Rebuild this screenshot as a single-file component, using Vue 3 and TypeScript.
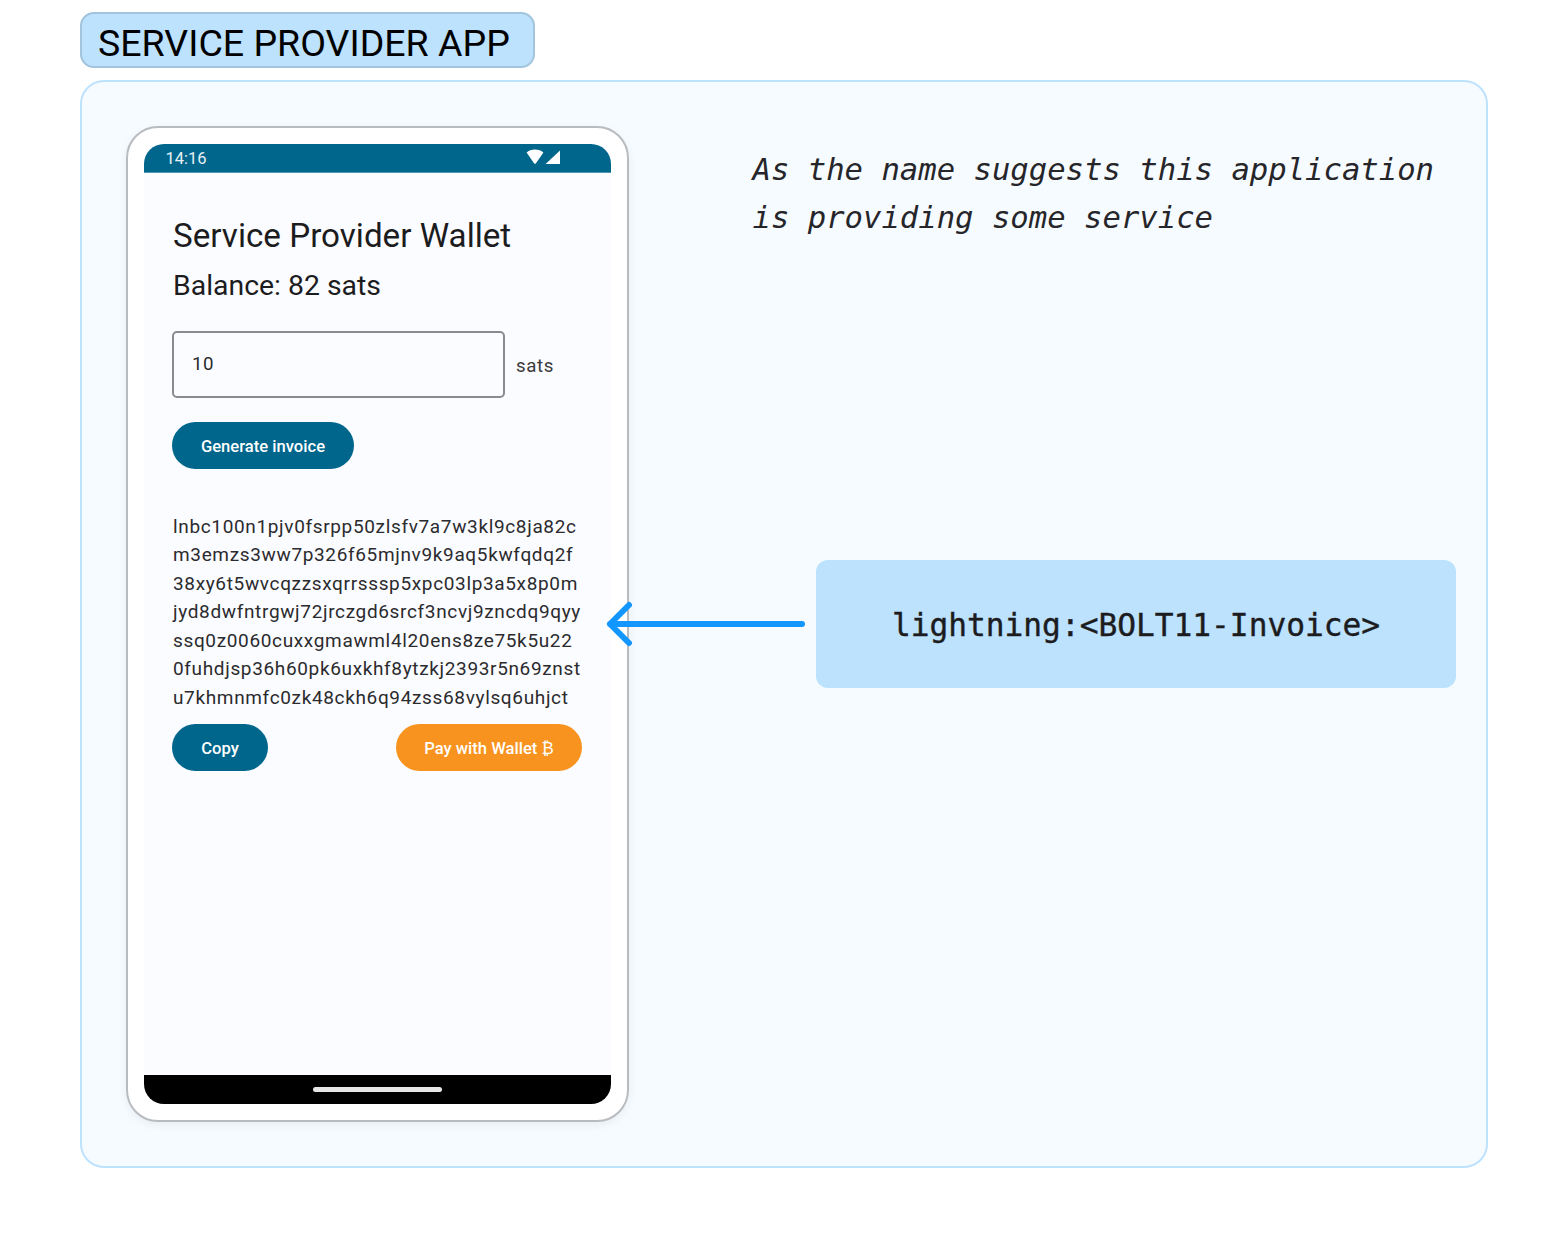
<template>
  <div class="page">
    <div class="tag">SERVICE PROVIDER APP</div>
    <section class="panel">
      <div class="phone">
        <div class="screen">
          <div class="status">
            <span class="clock">14:16</span>
            <svg class="status-icons" width="36" height="16" viewBox="0 0 36 16">
              <path d="M1.6 3.4C3.6 1.4 6.4 .4 10 .4s6.400 1 8.400 3L10.800 14.400q-.8 .8-1.600 0z" fill="#fff" />
              <path d="M35 1.600V15H20.600z" fill="#fff" />
            </svg>
          </div>
          <div class="content">
            <h1 class="title">Service Provider Wallet</h1>
            <p class="balance">Balance: {{ balance }} sats</p>
            <div class="amount-row">
              <div class="amount">10</div>
              <span class="unit">sats</span>
            </div>
            <button class="btn generate">Generate invoice</button>
            <div class="invoice">
              <div v-for="line in invoiceLines" :key="line">{{ line }}</div>
            </div>
            <div class="actions">
              <button class="btn copy">Copy</button>
              <button class="btn pay">Pay with Wallet ₿</button>
            </div>
          </div>
          <div class="nav"><span class="home-bar"></span></div>
        </div>
      </div>
      <div class="side">
        <p class="note">As the name suggests this application<br />is providing some service</p>
        <div class="uri">lightning:&lt;BOLT11-Invoice&gt;</div>
      </div>
      <svg class="arrow" width="204" height="48" viewBox="0 0 204 48">
        <path d="M198 24H6M25 5 6 24l19 19" fill="none" stroke="#1296ff" stroke-width="6" stroke-linecap="round" stroke-linejoin="round" />
      </svg>
    </section>
  </div>
</template>

<script setup lang="ts">
const balance = 82

const invoiceLines: string[] = [
  'lnbc100n1pjv0fsrpp50zlsfv7a7w3kl9c8ja82c',
  'm3emzs3ww7p326f65mjnv9k9aq5kwfqdq2f',
  '38xy6t5wvcqzzsxqrrsssp5xpc03lp3a5x8p0m',
  'jyd8dwfntrgwj72jrczgd6srcf3ncvj9zncdq9qyy',
  'ssq0z0060cuxxgmawml4l20ens8ze75k5u22',
  '0fuhdjsp36h60pk6uxkhf8ytzkj2393r5n69znst',
  'u7khmnmfc0zk48ckh6q94zss68vylsq6uhjct',
]
</script>

<style>
html,
body {
  margin: 0;
  background: #fff;
}
</style>

<style scoped>
.page {
  box-sizing: border-box;
  width: 1568px;
  height: 1248px;
  padding: 12px 80px 0;
  font-family: Roboto, "Liberation Sans", sans-serif;
  color: #1c1c1e;
}

.tag {
  box-sizing: border-box;
  width: 455px;
  height: 56px;
  padding-left: 16px;
  border: 2px solid #a2c4dd;
  border-radius: 14px;
  background: #bde2fe;
  color: #000;
  font-size: 37.5px;
  line-height: 58px;
  white-space: nowrap;
}

.panel {
  position: relative;
  box-sizing: border-box;
  display: flex;
  height: 1088px;
  margin-top: 12px;
  padding: 44px 30px 44px 44px;
  border: 2px solid #bde2fe;
  border-radius: 24px;
  background: #f6fbff;
}

.phone {
  box-sizing: border-box;
  flex: none;
  width: 503px;
  height: 996px;
  padding: 16px;
  border: 2px solid #b8bcc0;
  border-radius: 32px;
  background: #fff;
  box-shadow: 0 3px 10px rgba(0, 0, 0, 0.06);
}

.screen {
  display: flex;
  flex-direction: column;
  height: 100%;
  overflow: hidden;
  border-radius: 20px;
  background: #fbfcff;
}

.status {
  flex: none;
  display: flex;
  align-items: center;
  justify-content: space-between;
  box-sizing: border-box;
  height: 29px;
  padding: 3px 50px 0 21.5px;
  border-bottom: 1px solid #4f94b0;
  background: #00668c;
  color: #e8f2f6;
  font-size: 16.5px;
}

.status-icons {
  display: block;
  margin-top: -5px;
}

.clock {
  line-height: 1;
}

.content {
  flex: 1;
  padding: 42px 29px 0;
}

.title {
  margin: 0;
  font-size: 33.2px;
  font-weight: 400;
  line-height: 41px;
  white-space: nowrap;
}

.balance {
  margin: 10px 0 0;
  font-size: 28.4px;
  line-height: 40px;
}

.amount-row {
  display: flex;
  align-items: center;
  margin: 25px 0 0 -1px;
}

.amount {
  box-sizing: border-box;
  width: 333px;
  height: 67px;
  padding: 0 18px;
  border: 2px solid #8b8b8e;
  border-radius: 5px;
  color: #2b2b2e;
  font-size: 18.7px;
  letter-spacing: 0.5px;
  line-height: 63px;
}

.unit {
  margin: 3px 0 0 11px;
  color: #3a3a3e;
  font-size: 18.7px;
  letter-spacing: 0.6px;
}

.btn {
  display: block;
  height: 47px;
  padding: 2px 0 0;
  border: 0;
  border-radius: 24px;
  background: #00668c;
  color: #fff;
  font-family: inherit;
  font-size: 16.6px;
  font-weight: 500;
}

.generate {
  width: 182px;
  margin: 24px 0 0 -1px;
}

.invoice {
  margin-top: 43.5px;
  color: #2b2b2e;
  font-size: 19px;
  letter-spacing: 0.65px;
  line-height: 28.6px;
  white-space: nowrap;
}

.actions {
  display: flex;
  justify-content: space-between;
  width: 410px;
  margin: 11.5px 0 0 -1px;
}

.copy {
  width: 96px;
}

.pay {
  width: 186px;
  background: #f7931e;
}

.nav {
  flex: none;
  display: flex;
  align-items: flex-end;
  justify-content: center;
  height: 29px;
  padding-bottom: 12px;
  box-sizing: border-box;
  background: #000;
}

.home-bar {
  width: 129px;
  height: 5px;
  border-radius: 3px;
  background: #e6e6e6;
}

.side {
  flex: 1;
  min-width: 0;
  padding: 20px 0 0 123.5px;
}

.note {
  margin: 0;
  color: #26262a;
  font-family: "DejaVu Sans Mono", "Liberation Mono", monospace;
  font-size: 30.6px;
  font-style: italic;
  line-height: 48px;
  white-space: nowrap;
}

.uri {
  box-sizing: border-box;
  width: 640px;
  height: 128px;
  margin: 318px 0 0 63.5px;
  border-radius: 12px;
  background: #bde2fe;
  font-family: "DejaVu Sans Mono", "Liberation Mono", monospace;
  font-size: 31.2px;
  -webkit-text-stroke: 0.4px #1c1c1e;
  line-height: 130px;
  text-align: center;
  white-space: nowrap;
}

.arrow {
  position: absolute;
  left: 522px;
  top: 518px;
}
</style>
